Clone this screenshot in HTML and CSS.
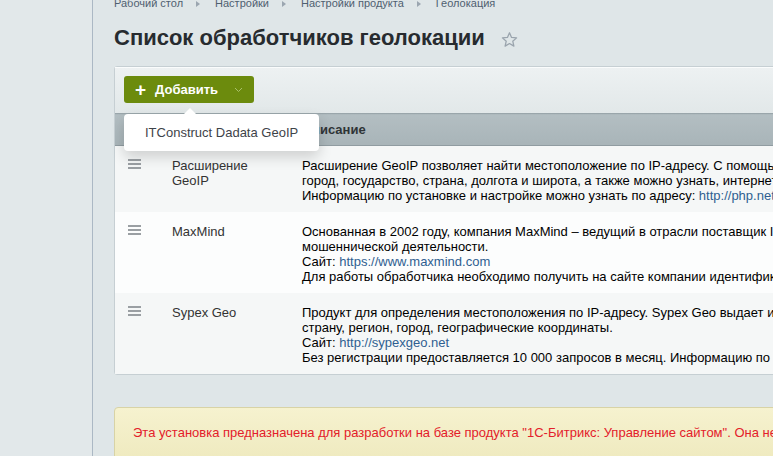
FILE: index.html
```html
<!DOCTYPE html>
<html lang="ru">
<head>
    <meta charset="UTF-8">
    <meta name="viewport" content="width=device-width, initial-scale=1.0">
    <title>Список обработчиков геолокации</title>
    <link rel="stylesheet" href="styles.css">
</head>
<body>
    <div class="layout">
        <aside class="side"></aside>

        <main class="content">
            <div class="breadcrumbs">
                <a href="#">Рабочий стол</a>
                <span class="crumb-arrow"></span>
                <a href="#">Настройки</a>
                <span class="crumb-arrow"></span>
                <a href="#">Настройки продукта</a>
                <span class="crumb-arrow"></span>
                <a href="#">Геолокация</a>
            </div>

            <h1 class="page-title">
                Список обработчиков геолокации
                <svg class="star" width="17" height="17" viewBox="0 0 24 24">
                    <path d="M12 2.5l2.9 6.6 7.1.6-5.4 4.7 1.6 7-6.2-3.7-6.2 3.7 1.6-7L2 9.7l7.1-.6z" fill="none" stroke="#9aa4ad" stroke-width="1.8" stroke-linejoin="round"/>
                </svg>
            </h1>

            <div class="grid-panel">
                <div class="toolbar">
                    <button class="btn-add">
                        <span class="btn-plus">+</span>
                        <span class="btn-label">Добавить</span>
                        <svg class="btn-caret" width="9" height="6" viewBox="0 0 9 6">
                            <path d="M1 1l3.5 3.5L8 1" fill="none" stroke="#a9c06a" stroke-width="1"/>
                        </svg>
                    </button>

                    <div class="popup">
                        <a href="#" class="popup-item">ITConstruct Dadata GeoIP</a>
                    </div>
                </div>

                <table class="grid">
                    <thead>
                        <tr>
                            <th class="col-drag"></th>
                            <th class="col-name">Название</th>
                            <th class="col-desc">Описание</th>
                        </tr>
                    </thead>
                    <tbody>
                        <tr>
                            <td class="col-drag"><span class="drag"></span></td>
                            <td class="col-name">Расширение<br>GeoIP</td>
                            <td class="col-desc">
                                Расширение GeoIP позволяет найти местоположение по IP-адресу. С помощью него можно определить<br>
                                город, государство, страна, долгота и широта, а также можно узнать, интернет-провайдера и др.<br>
                                Информацию по установке и настройке можно узнать по адресу: <a href="#">http://php.net/manual/ru/book.geoip.php</a>
                            </td>
                        </tr>
                        <tr>
                            <td class="col-drag"><span class="drag"></span></td>
                            <td class="col-name">MaxMind</td>
                            <td class="col-desc">
                                Основанная в 2002 году, компания MaxMind – ведущий в отрасли поставщик IP-аналитики и средств выявления<br>
                                мошеннической деятельности.<br>
                                Сайт: <a href="#">https://www.maxmind.com</a><br>
                                Для работы обработчика необходимо получить на сайте компании идентификатор пользователя и ключ.
                            </td>
                        </tr>
                        <tr>
                            <td class="col-drag"><span class="drag"></span></td>
                            <td class="col-name">Sypex Geo</td>
                            <td class="col-desc">
                                Продукт для определения местоположения по IP-адресу. Sypex Geo выдает информацию о местоположении:<br>
                                страну, регион, город, географические координаты.<br>
                                Сайт: <a href="#">http://sypexgeo.net</a><br>
                                Без регистрации предоставляется 10 000 запросов в месяц. Информацию по тарифам можно узнать на сайте.
                            </td>
                        </tr>
                    </tbody>
                </table>
            </div>

            <div class="notice">
                Эта установка предназначена для разработки на базе продукта "1С-Битрикс: Управление сайтом". Она не может быть использована для публичного сайта.
            </div>
        </main>
    </div>
</body>
</html>
```

FILE: styles.css
```css
html, body {
    margin: 0;
    padding: 0;
}

body {
    width: 773px;
    height: 456px;
    overflow: hidden;
    background-color: #dfe6e8;
    font-family: "Liberation Sans", Arial, sans-serif;
    font-size: 13px;
    color: #000;
}

.layout {
    display: flex;
    min-height: 456px;
}

.side {
    width: 92px;
    flex-shrink: 0;
    background-color: #e2e8ea;
    border-right: 1px solid #abb8c4;
}

.content {
    padding-left: 21px;
    flex-shrink: 0;
    width: 1100px;
}

/* breadcrumbs */
.breadcrumbs {
    margin-top: -4px;
    height: 15px;
    line-height: 15px;
    font-size: 11px;
    display: flex;
    align-items: center;
}

.breadcrumbs a {
    color: #4f5f70;
    text-decoration: none;
}

.crumb-arrow {
    width: 0;
    height: 0;
    margin: 0 15px 0 13px;
    border-top: 3px solid transparent;
    border-bottom: 3px solid transparent;
    border-left: 4px solid #9ba6b0;
}

.page-title {
    margin: 13px 0 0 0;
    height: 28px;
    font-size: 22px;
    line-height: 28px;
    font-weight: bold;
    color: #272b2f;
    display: flex;
    align-items: center;
}

.star {
    margin-left: 16px;
    margin-top: 2px;
}

/* panel */
.grid-panel {
    margin-top: 14px;
    border: 1px solid #c6cfd3;
    border-radius: 3px;
    background-color: #fff;
}

.toolbar {
    position: relative;
    padding: 8px 9px 10px;
    background: linear-gradient(#edf1f2, #e2e8e9);
    border-top: 1px solid #fafcfc;
}

.btn-add {
    display: flex;
    align-items: center;
    width: 130px;
    height: 27px;
    padding: 0 0 0 11px;
    background-color: #6c8b0d;
    border: none;
    border-radius: 3px;
    color: #fff;
    font-family: "Liberation Sans", Arial, sans-serif;
    font-size: 13px;
    font-weight: bold;
    cursor: pointer;
}

.btn-plus {
    font-size: 19px;
    line-height: 19px;
    margin-right: 9px;
}

.btn-caret {
    margin-left: 16px;
}

.popup {
    position: absolute;
    left: 9px;
    top: 46px;
    width: 195px;
    height: 37px;
    background-color: #fff;
    border-radius: 4px;
    box-shadow: 0 6px 14px rgba(0, 0, 0, 0.16);
    display: flex;
    align-items: center;
    z-index: 2;
}

.popup::before {
    content: "";
    position: absolute;
    top: -6px;
    left: 60px;
    border-left: 6px solid transparent;
    border-right: 6px solid transparent;
    border-bottom: 6px solid #fff;
}

.popup-item {
    padding-left: 21px;
    color: #3e4349;
    text-decoration: none;
    font-size: 13px;
}

/* table */
.grid {
    width: 100%;
    border-collapse: collapse;
}

.grid th {
    height: 31px;
    padding: 0;
    text-align: left;
    font-weight: bold;
    color: #2f3437;
    background: linear-gradient(#b3bec2, #a8b4b8);
    border-top: 1px solid #9aa6ab;
    border-bottom: 1px solid #909ca1;
}

.grid td {
    padding: 12px 0 9px;
    line-height: 15px;
    vertical-align: top;
    white-space: nowrap;
}

.grid tbody tr:nth-child(odd) {
    background-color: #f5f7f7;
}

.grid tbody tr:nth-child(even) {
    background-color: #fcfdfd;
}

.col-drag {
    width: 57px;
}

.grid td.col-drag {
    padding-left: 13px;
    box-sizing: border-box;
}

.col-name {
    width: 130px;
    color: #333;
}

.col-desc a {
    color: #2f5f91;
    text-decoration: none;
}

.drag {
    display: block;
    width: 13px;
    height: 2px;
    margin-top: 1px;
    background-color: #9a9fa3;
    box-shadow: 0 4px 0 #9a9fa3, 0 8px 0 #9a9fa3;
}

/* notice */
.notice {
    margin-top: 32px;
    padding: 17px 18px 20px;
    border: 1px solid #d8d3a6;
    border-radius: 4px;
    background: linear-gradient(#f6f2cf, #efeabf);
    color: #e3202a;
    white-space: nowrap;
}
```
